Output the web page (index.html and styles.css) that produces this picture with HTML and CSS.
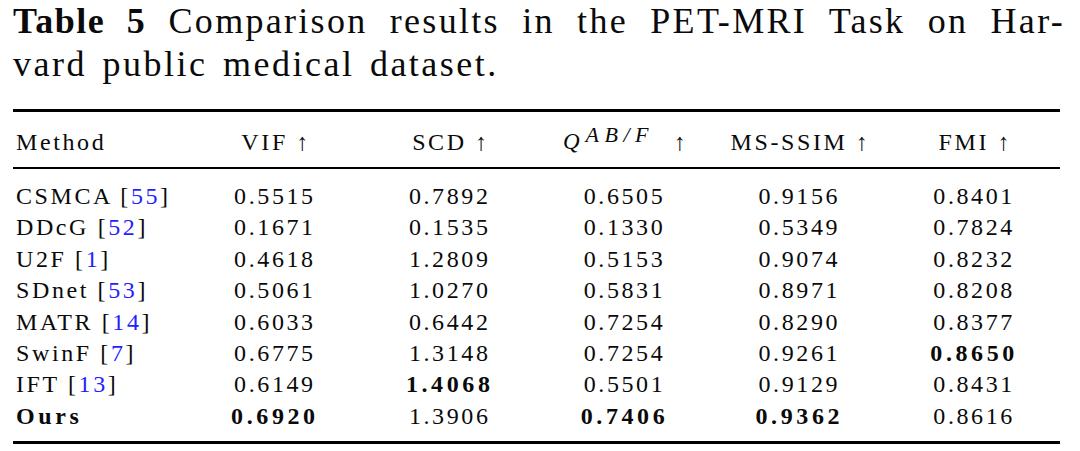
FILE: index.html
```html
<!DOCTYPE html>
<html lang="en">
<head>
<meta charset="utf-8">
<title>Table 5</title>
<link rel="stylesheet" href="styles.css">
</head>
<body>
<div class="page">
  <p class="caption">
    <span class="cap-line cap-first"><b class="cap-label">Table 5</b> Comparison results in the PET-MRI Task on Har-</span>
    <span class="cap-line cap-second">vard public medical dataset.</span>
  </p>
  <table class="results">
    <colgroup>
      <col class="col-method">
      <col><col><col><col><col>
    </colgroup>
    <thead>
      <tr>
        <th class="method">Method</th>
        <th>VIF <span class="arrow">↑</span></th>
        <th>SCD <span class="arrow">↑</span></th>
        <th><span class="q"><i class="q-main">Q</i><sup class="q-sup">AB/F</sup></span><span class="arrow q-arrow">↑</span></th>
        <th>MS-SSIM <span class="arrow">↑</span></th>
        <th>FMI <span class="arrow">↑</span></th>
      </tr>
    </thead>
    <tbody>
      <tr>
        <td class="method">CSMCA [<span class="cite">55</span>]</td>
        <td>0.5515</td><td>0.7892</td><td>0.6505</td><td>0.9156</td><td>0.8401</td>
      </tr>
      <tr>
        <td class="method">DDcG [<span class="cite">52</span>]</td>
        <td>0.1671</td><td>0.1535</td><td>0.1330</td><td>0.5349</td><td>0.7824</td>
      </tr>
      <tr>
        <td class="method">U2F [<span class="cite">1</span>]</td>
        <td>0.4618</td><td>1.2809</td><td>0.5153</td><td>0.9074</td><td>0.8232</td>
      </tr>
      <tr>
        <td class="method">SDnet [<span class="cite">53</span>]</td>
        <td>0.5061</td><td>1.0270</td><td>0.5831</td><td>0.8971</td><td>0.8208</td>
      </tr>
      <tr>
        <td class="method">MATR [<span class="cite">14</span>]</td>
        <td>0.6033</td><td>0.6442</td><td>0.7254</td><td>0.8290</td><td>0.8377</td>
      </tr>
      <tr>
        <td class="method">SwinF [<span class="cite">7</span>]</td>
        <td>0.6775</td><td>1.3148</td><td>0.7254</td><td>0.9261</td><td class="best">0.8650</td>
      </tr>
      <tr>
        <td class="method">IFT [<span class="cite">13</span>]</td>
        <td>0.6149</td><td class="best">1.4068</td><td>0.5501</td><td>0.9129</td><td>0.8431</td>
      </tr>
      <tr class="ours">
        <td class="method best">Ours</td>
        <td class="best">0.6920</td><td>1.3906</td><td class="best">0.7406</td><td class="best">0.9362</td><td>0.8616</td>
      </tr>
    </tbody>
  </table>
</div>
</body>
</html>
```

FILE: styles.css
```css
html, body {
  margin: 0;
  padding: 0;
  background: #ffffff;
}

body {
  color: #0a0a0a;
  font-family: "Liberation Serif", "Times New Roman", serif;
}

.page {
  padding: 0 0 0 13px;
  width: 1050px;
}

.caption {
  margin: 0;
  width: 1052px;
  font-size: 36px;
  line-height: 43px;
  letter-spacing: 2.3px;
}

.cap-line {
  display: block;
}

.cap-first {
  text-align: justify;
  text-align-last: justify;
}

.cap-second {
  word-spacing: 4px;
  letter-spacing: 2.5px;
}

.cap-label {
  font-weight: bold;
  letter-spacing: 1.5px;
}

.results {
  margin-top: 23px;
  width: 1047px;
  border-collapse: collapse;
  table-layout: fixed;
  font-size: 24px;
  letter-spacing: 2.6px;
}

.col-method {
  width: 173px;
}

.results thead tr {
  border-top: 3px solid #000;
  border-bottom: 2px solid #000;
}

.results th {
  font-weight: normal;
  text-align: center;
  line-height: 31px;
  padding: 14px 0 9px 3px;
  white-space: nowrap;
}

.results td {
  text-align: center;
  line-height: 31.4px;
  padding: 0 0 0 3px;
  white-space: nowrap;
}

.results th.method,
.results td.method {
  text-align: left;
  padding-left: 3px;
}

.results tbody tr:first-child td {
  padding-top: 12px;
}

.results tbody tr:last-child td {
  padding-bottom: 9px;
}

.results tbody tr:last-child {
  border-bottom: 3px solid #000;
}

.cite {
  color: #1f1fff;
}

.best {
  font-weight: bold;
  letter-spacing: 3.6px;
}

.arrow {
  font-size: 24px;
  letter-spacing: 0;
}

.q {
  letter-spacing: 1px;
}

.q-main {
  font-size: 23px;
  vertical-align: 1px;
  margin-right: 5px;
}

.q-sup {
  font-size: 22px;
  font-style: italic;
  letter-spacing: 5.5px;
  vertical-align: 8px;
  line-height: 0;
}

.q-arrow {
  margin-left: 20px;
}
```
